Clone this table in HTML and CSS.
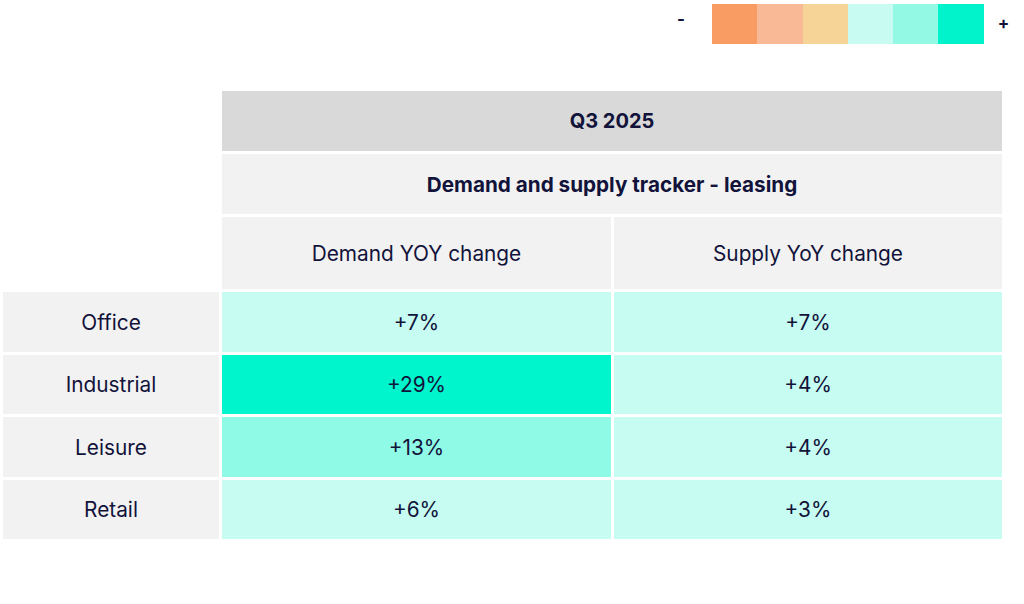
FILE: index.html
```html
<!DOCTYPE html>
<html lang="en">
<head>
<meta charset="utf-8">
<title>Demand and supply tracker</title>
<link rel="stylesheet" href="styles.css">
</head>
<body>
<div class="page">
  <div class="legend">
    <span class="legend-sign minus">-</span>
    <div class="legend-scale">
      <span class="sw sw1"></span>
      <span class="sw sw2"></span>
      <span class="sw sw3"></span>
      <span class="sw sw4"></span>
      <span class="sw sw5"></span>
      <span class="sw sw6"></span>
    </div>
    <span class="legend-sign plus">+</span>
  </div>

  <div class="tracker">
    <div class="blank b-top"></div>
    <div class="cell head-q span2">Q3 2025</div>
    <div class="cell head-t span2">Demand and supply tracker - leasing</div>
    <div class="cell head-c">Demand YOY change</div>
    <div class="cell head-c">Supply YoY change</div>

    <div class="cell label">Office</div>
    <div class="cell lv1">+7%</div>
    <div class="cell lv1">+7%</div>

    <div class="cell label">Industrial</div>
    <div class="cell lv3">+29%</div>
    <div class="cell lv1">+4%</div>

    <div class="cell label">Leisure</div>
    <div class="cell lv2">+13%</div>
    <div class="cell lv1">+4%</div>

    <div class="cell label">Retail</div>
    <div class="cell lv1">+6%</div>
    <div class="cell lv1">+3%</div>
  </div>
</div>
</body>
</html>
```

FILE: styles.css
```css
* { box-sizing: border-box; }
html, body { margin: 0; padding: 0; background: #ffffff; }
body {
  font-family: Inter, "Noto Sans", sans-serif;
  color: #12133a;
  width: 1024px;
  height: 604px;
  overflow: hidden;
}
.page { padding-top: 4px; }

.legend {
  display: flex;
  align-items: center;
  height: 40px;
  padding-left: 677px;
}
.legend-sign {
  font-size: 17px;
  font-weight: 700;
  line-height: 1;
}
.legend-sign.minus { width: 35px; margin-top: -10px; }
.legend-sign.plus { margin-left: 14px; margin-top: -2px; }
.legend-scale { display: flex; }
.sw { display: block; width: 45.3px; height: 40px; }
.sw1 { background: #f89c64; }
.sw2 { background: #f9b896; }
.sw3 { background: #f6d396; }
.sw4 { background: #c8fbf1; }
.sw5 { background: #93f8e4; }
.sw6 { background: #00f3ca; }

.tracker {
  display: grid;
  margin: 47px 0 0 3px;
  width: 999px;
  grid-template-columns: 216px 389px 388px;
  grid-template-rows: 60px 60px 72px 60px 59px 60px 59px;
  gap: 3px;
}
.blank.b-top { grid-row: 1 / span 3; grid-column: 1; }
.span2 { grid-column: 2 / span 2; }
.cell {
  display: flex;
  align-items: center;
  justify-content: center;
  font-size: 20.8px;
  text-align: center;
}
.head-q { background: #d9d9d9; font-weight: 700; font-size: 20px; }
.head-t { background: #f2f2f2; font-weight: 700; font-size: 20.7px; }
.head-c { background: #f2f2f2; }
.label { background: #f2f2f2; }
.lv1 { background: #c6fcf2; }
.lv2 { background: #8ffae6; }
.lv3 { background: #00f5cc; }
```
